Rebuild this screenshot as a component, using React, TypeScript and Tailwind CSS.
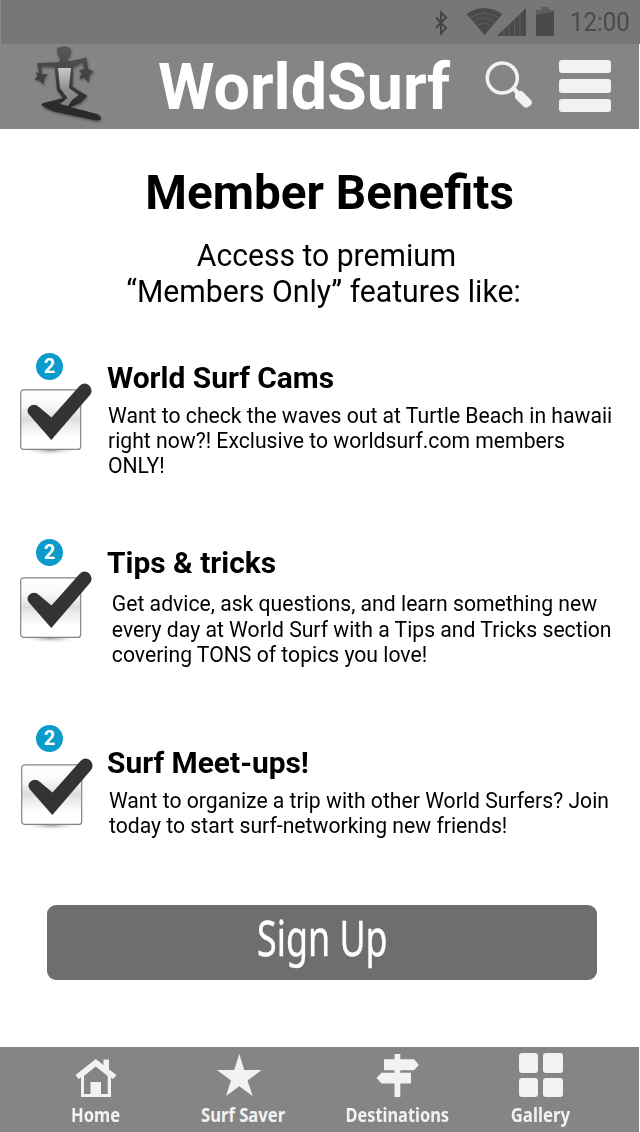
import React from 'react';

type Benefit = {
  title: string;
  lines: string[];
  check: string;
  heading: string;
  body: string;
};

const benefits: Benefit[] = [
  {
    title: 'World Surf Cams',
    lines: [
      'Want to check the waves out at Turtle Beach in hawaii',
      'right now?! Exclusive to worldsurf.com members',
      'ONLY!',
    ],
    check: 'mt-[2px] ml-[18px]',
    heading: 'mt-2',
    body: 'mt-[7px] pl-[1px] leading-[25px]',
  },
  {
    title: 'Tips & tricks',
    lines: [
      'Get advice, ask questions, and learn something new',
      'every day at World Surf with a Tips and Tricks section',
      'covering TONS of topics you love!',
    ],
    check: 'mt-[4px] ml-[18px]',
    heading: 'mt-[7px]',
    body: 'mt-[10px] pl-[5px] leading-[25.5px]',
  },
  {
    title: 'Surf Meet-ups!',
    lines: [
      'Want to organize a trip with other World Surfers? Join',
      'today to start surf-networking new friends!',
    ],
    check: 'mt-[5px] ml-[19px]',
    heading: 'mt-[21px]',
    body: 'mt-[7px] pl-[2px] leading-[25px]',
  },
];

function SurferLogo() {
  return (
    <svg className="h-[84px] w-[76px]" viewBox="30 44 76 84">
      <defs>
        <linearGradient id="figure" gradientUnits="userSpaceOnUse" x1="0" y1="46" x2="0" y2="108">
          <stop offset="0" stopColor="#595959" />
          <stop offset=".5" stopColor="#414141" />
          <stop offset="1" stopColor="#292929" />
        </linearGradient>
        <linearGradient id="torso" x1="0" y1="0" x2="0" y2="1">
          <stop offset="0" stopColor="#c8c8c8" />
          <stop offset=".55" stopColor="#909090" />
          <stop offset="1" stopColor="#808080" />
        </linearGradient>
        <filter id="soft" x="-20%" y="-20%" width="140%" height="140%">
          <feDropShadow dx="0.6" dy="1.5" stdDeviation="1.2" floodColor="#333" floodOpacity=".55" />
        </filter>
      </defs>
      <g filter="url(#soft)">
        <path fill="url(#figure)" d="M57 50Q57 46.500 61 47Q65 45.500 68 47Q71.500 48 71 52Q70.500 56 67.500 58.500L68 61.500L86.500 57.500L88 68.500L93.500 71.500L89.500 75L88.500 82.500L84.500 77.500L79 79L81.500 74L79 70L84 69L82.500 62.500L73 67L72.500 86.500L87.500 96L80 103L69 107.500L41.500 105L43.500 103L63 98L57 90L54.500 67L41.300 66.500L42 74L48 74.500L44.500 78L43.500 84.500L39.500 80.500L34.500 79.500L37.500 76L35.500 72.500L39 73L37 63L59 62L60.500 59Q57 55 57 50Z" />
        <path fill="#292929" d="M41 104Q46 102 66 106L97 114Q102 116 100.500 120L96 120.500L54 111.500Q44 108 41 104Z" />
      </g>
      <path fill="url(#torso)" d="M58 68H71L69 88L78.500 95L72 100L68 106L60 104L67.500 98L60 88Z" />
    </svg>
  );
}

function StatusIcons() {
  return (
    <svg className="h-[44px] w-[130px]" viewBox="430 0 130 44">
      <path d="M436 17.500L446 28L441 33.500V12.500L446 17.500L436 28" fill="none" stroke="#444" strokeWidth="2" />
      <path d="M466.500 14Q484 2 502.500 14L484.500 35Z" fill="#4a4a4a" />
      <g fill="none" stroke="#626262" strokeWidth="0.9">
        <path d="M470 18Q484 8 499 18M473.500 22Q484 14 495.500 22M477 26Q484 21 492 26" />
      </g>
      <path d="M497 36L526 8V36Z" fill="#4a4a4a" />
      <path d="M504 29V36M509 24V36M514.500 19V36M520 14V36" stroke="#626262" strokeWidth="0.9" />
      <path d="M536 10H541V7H549V10H554V16H536Z" fill="#5c5c5c" />
      <path d="M536 15L554 12V36H536Z" fill="#4a4a4a" />
    </svg>
  );
}

function SearchIcon() {
  return (
    <svg className="h-[54px] w-[52px]" viewBox="482 58 52 54">
      <circle cx="502.300" cy="78" r="15" fill="none" stroke="#f2f2f2" strokeWidth="3.600" />
      <path d="M512 90L515 87L519 91L522 91L531 100Q534 104 528 107Q525 109 522 105L515 98L515 93Z" fill="#f2f2f2" />
    </svg>
  );
}

function CheckMark({ className }: { className: string }) {
  return (
    <svg className={`h-[76px] w-[76px] shrink-0 ${className}`} viewBox="0 0 76 76">
      <defs>
        <linearGradient id="box" x1="0" y1="0" x2="0" y2="1">
          <stop offset="0" stopColor="#fff" />
          <stop offset=".25" stopColor="#fafafa" />
          <stop offset=".5" stopColor="#dcdcdc" />
          <stop offset=".56" stopColor="#e8e8e8" />
          <stop offset=".8" stopColor="#fff" />
          <stop offset="1" stopColor="#fff" />
        </linearGradient>
        <radialGradient id="ground">
          <stop offset="0" stopColor="#999" />
          <stop offset="1" stopColor="#fff" stopOpacity="0" />
        </radialGradient>
      </defs>
      <ellipse cx="32.500" cy="68" rx="29" ry="5.500" fill="url(#ground)" />
      <rect x="2.700" y="7.900" width="60" height="59.500" rx="3" fill="url(#box)" stroke="#858585" strokeWidth="1.200" />
      <path fill="#333" d="M11 32.500Q8 28.500 11 25Q16 20.500 21 25L33.500 35.500L61.500 4Q66.500 -0.500 71.300 3.500Q75.500 8.500 72 13L33.300 58Z" />
    </svg>
  );
}

function HomeIcon() {
  return (
    <svg className="h-[46px] w-[46px]" viewBox="73 1052 46 46">
      <path
        fill="#f2f2f2"
        fillRule="evenodd"
        d="M95.800 1059L103.500 1065V1059.500H109V1069.500L116.500 1075L113 1079L111 1077.500V1097H81V1077.500L78.500 1079L75.500 1075ZM95.800 1066.500L84 1076V1094H90.500V1082H101V1094H107.700V1076Z"
      />
    </svg>
  );
}

function StarIcon() {
  return (
    <svg className="h-[46px] w-[46px]" viewBox="216 1052 46 46">
      <path fill="#f2f2f2" d="M239.300 1054L244.200 1070H261.500L247.500 1080.500L252.700 1096L239.300 1086.300L226 1096L231 1080.500L217 1070H234.200Z" />
    </svg>
  );
}

function SignIcon() {
  return (
    <svg className="h-[46px] w-[46px]" viewBox="375 1052 46 46">
      <path
        fill="#f2f2f2"
        d="M394.500 1054H400.300V1059.300H414L418.800 1065L414 1070.300H400.300V1072.700H411V1083.500H400.300V1097H394.500V1083.500H381.500L376.500 1078L381.500 1072.700H394.500V1070.300H384V1059.300H394.500Z"
      />
    </svg>
  );
}

function GridIcon() {
  return (
    <span className="grid h-[46px] w-[46px] grid-cols-2 gap-[5px] p-px">
      <span className="rounded-[3px] bg-[#f2f2f2]" />
      <span className="rounded-[3px] bg-[#f2f2f2]" />
      <span className="rounded-[3px] bg-[#f2f2f2]" />
      <span className="rounded-[3px] bg-[#f2f2f2]" />
    </span>
  );
}

const tabs = [
  { label: 'Home', icon: <HomeIcon />, place: 'ml-[45.500px] w-[100px]', text: 'scale-x-[0.83]' },
  { label: 'Surf Saver', icon: <StarIcon />, place: 'ml-[43px] w-[100px]', text: 'scale-x-[0.83] translate-x-[4.5px]' },
  { label: 'Destinations', icon: <SignIcon />, place: 'ml-[49px] w-[120px]', text: 'scale-x-[0.82]' },
  { label: 'Gallery', icon: <GridIcon />, place: 'ml-[33px] w-[100px]', text: 'scale-x-[0.84]' },
];

export default function App() {
  return (
    <div className="flex h-[1132px] w-[640px] flex-col overflow-hidden bg-white font-['Roboto',sans-serif] text-black">
      <div className="flex h-[44px] shrink-0 items-center border-l border-[#8c8c8c] bg-[#777] pl-[429px]">
        <StatusIcons />
        <span className="ml-[10px] mt-[2px] origin-left scale-x-[0.96] whitespace-nowrap text-[25px] leading-[44px] text-[#4a4a4a]">12:00</span>
      </div>
      <header className="mr-px flex h-[85px] shrink-0 items-start bg-[#858585]">
        <div className="ml-[30px]">
          <SurferLogo />
        </div>
        <h1 className="ml-[51.500px] w-[324.500px] origin-left scale-x-[0.993] whitespace-nowrap text-[65px] font-bold leading-[86px] text-white">WorldSurf</h1>
        <div className="mt-[14px]">
          <SearchIcon />
        </div>
        <div className="ml-[25px] mt-[15.500px] flex w-[52px] flex-col gap-[6px]">
          <span className="h-[13.500px] rounded-[3px] bg-[#f2f2f2]" />
          <span className="h-[13.500px] rounded-[3px] bg-[#f2f2f2]" />
          <span className="h-[13.500px] rounded-[3px] bg-[#f2f2f2]" />
        </div>
      </header>
      <main className="flex h-[918px] shrink-0 flex-col">
        <h2 className="mt-[34px] flex justify-center whitespace-nowrap pl-[19px] text-[49px] font-bold leading-[60px]">
          <span className="scale-x-[0.972]">Member Benefits</span>
        </h2>
        <div className="mt-[15px] flex flex-col items-center whitespace-nowrap text-[31px] leading-[36px]">
          <p className="ml-[14px] scale-x-[0.971]">Access to premium</p>
          <p className="ml-[7px] scale-x-[0.974]">“Members Only” features like:</p>
        </div>
        <div className="mt-[42px]">
          {benefits.map((b) => (
            <section key={b.title} className="flex h-[186px]">
              <div className="flex w-[107px] shrink-0 flex-col">
                <span className="ml-[36px] mt-[0.500px] flex h-[27px] w-[27px] items-center justify-center rounded-full bg-[#0a9bcb] text-[20px] font-bold leading-[27px] text-white">
                  2
                </span>
                <CheckMark className={b.check} />
              </div>
              <div className="whitespace-nowrap">
                <h3 className={`origin-left scale-x-[0.997] text-[30px] font-bold leading-[36px] ${b.heading}`}>{b.title}</h3>
                <div className={`origin-left scale-x-[0.962] text-[22px] ${b.body}`}>
                  {b.lines.map((l) => (
                    <p key={l}>{l}</p>
                  ))}
                </div>
              </div>
            </section>
          ))}
        </div>
        <button className="-mt-[5px] ml-[47px] flex h-[75px] w-[550px] items-center justify-center rounded-[9px] bg-[#6d6e70] text-white">
          <span className="-mt-[11px] scale-x-[0.73] whitespace-nowrap font-['Noto_Sans',sans-serif] text-[49px] leading-[60px] [-webkit-text-stroke:0.4px_white]">Sign Up</span>
        </button>
      </main>
      <nav className="mr-px flex h-[85px] shrink-0 bg-[#858585] pt-[5px]">
        {tabs.map((t) => (
          <a key={t.label} className={`flex shrink-0 flex-col items-center ${t.place}`}>
            {t.icon}
            <span className={`mt-[5px] whitespace-nowrap font-['Noto_Sans',sans-serif] text-[20px] font-bold leading-[24px] text-[#f2f2f2] ${t.text}`}>
              {t.label}
            </span>
          </a>
        ))}
      </nav>
    </div>
  );
}
